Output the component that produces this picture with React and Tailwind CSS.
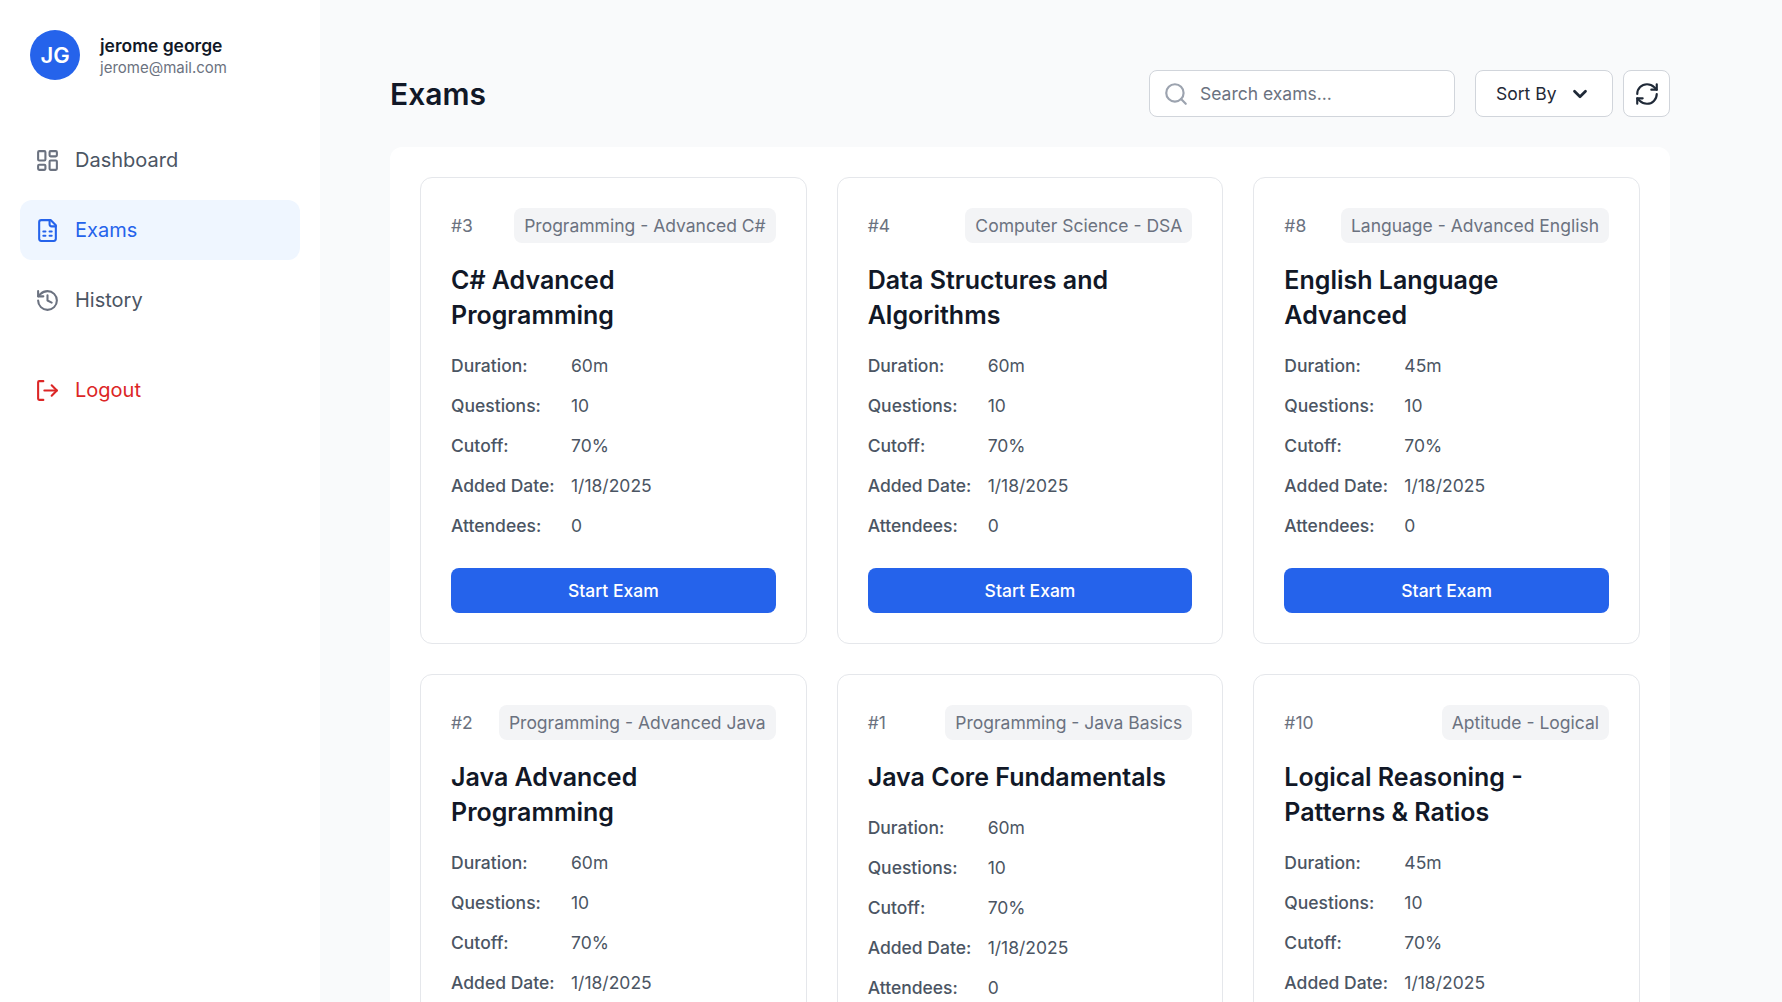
import { LayoutDashboard, History, Search, ChevronDown, RefreshCw } from 'lucide-react';

const exams = [
  { id: 3, tag: 'Programming - Advanced C#', title: 'C# Advanced Programming', duration: '60m' },
  { id: 4, tag: 'Computer Science - DSA', title: 'Data Structures and Algorithms', duration: '60m' },
  { id: 8, tag: 'Language - Advanced English', title: 'English Language Advanced', duration: '45m' },
  { id: 2, tag: 'Programming - Advanced Java', title: 'Java Advanced Programming', duration: '60m' },
  { id: 1, tag: 'Programming - Java Basics', title: 'Java Core Fundamentals', duration: '60m' },
  { id: 10, tag: 'Aptitude - Logical', title: 'Logical Reasoning - Patterns & Ratios', duration: '45m' },
];

function ExamIcon() {
  return (
    <svg width="25" height="25" viewBox="0 0 24 24" fill="none" stroke="currentColor" strokeWidth="2" strokeLinecap="round" strokeLinejoin="round">
      <path d="M15 2H6a2 2 0 0 0-2 2v16a2 2 0 0 0 2 2h12a2 2 0 0 0 2-2V7Z" />
      <path d="M14 2v4a2 2 0 0 0 2 2h4" />
      <path d="M8 13h2M14 13h2M8 17h2M14 17h2" />
    </svg>
  );
}

function LogoutIcon() {
  return (
    <svg width="25" height="25" viewBox="0 0 24 24" fill="none" stroke="currentColor" strokeWidth="2" strokeLinecap="round" strokeLinejoin="round">
      <path d="M8 3H4a1 1 0 0 0-1 1v16a1 1 0 0 0 1 1h4" />
      <path d="M21 12H9" />
      <path d="M16 7l5 5-5 5" />
    </svg>
  );
}

function NavItem({ icon, label, active, danger }) {
  let color = 'text-[#4b5563]';
  if (active) color = 'bg-[#eff6ff] text-[#2563eb]';
  if (danger) color = 'text-[#dc2626]';
  return (
    <a className={`flex items-center gap-[15px] h-[60px] px-[15px] rounded-[12px] text-[20px] ${color}`}>
      {icon}
      <span>{label}</span>
    </a>
  );
}

function Row({ label, value }) {
  return (
    <div className="flex h-[40px] items-center text-[17.5px]">
      <span className="w-[120px] font-medium text-[#4b5563]">{label}</span>
      <span className="text-[#4b5563]">{value}</span>
    </div>
  );
}

function ExamCard({ exam }) {
  return (
    <div className="bg-white border border-[#e5e7eb] rounded-[12px] p-[30px]">
      <div className="flex items-center justify-between mb-[20px]">
        <span className="pt-[2px] text-[17.5px] text-[#6b7280]">#{exam.id}</span>
        <span className="h-[35px] pt-[2px] flex items-center px-[10px] rounded-[8px] bg-[#f3f4f6] text-[17.5px] text-[#6b7280]">{exam.tag}</span>
      </div>
      <h3 className="text-[25px] leading-[35px] font-semibold text-[#111827] mb-[13px]">{exam.title}</h3>
      <div className="mb-[22px]">
        <Row label="Duration:" value={exam.duration} />
        <Row label="Questions:" value="10" />
        <Row label="Cutoff:" value="70%" />
        <Row label="Added Date:" value="1/18/2025" />
        <Row label="Attendees:" value="0" />
      </div>
      <button className="w-full h-[45px] pt-[2px] rounded-[8px] bg-[#2563eb] text-white text-[17.5px] font-medium">Start Exam</button>
    </div>
  );
}

export default function App() {
  return (
    <div className="flex h-screen overflow-hidden bg-[#f9fafb] font-['Inter',sans-serif]">
      <aside className="w-[320px] shrink-0 bg-white px-[20px] pt-[30px]">
        <div className="flex items-center gap-[20px] pl-[10px] mb-[50px]">
          <div className="w-[50px] h-[50px] rounded-full bg-[#2563eb] text-white flex items-center justify-center text-[22px] font-semibold">JG</div>
          <div>
            <p className="text-[17.5px] leading-[25px] font-semibold text-[#111827]">jerome george</p>
            <p className="text-[15px] leading-[20px] text-[#6b7280]">jerome@mail.com</p>
          </div>
        </div>
        <nav className="flex flex-col gap-[10px]">
          <NavItem icon={<LayoutDashboard size={25} className="text-[#6b7280]" />} label="Dashboard" />
          <NavItem icon={<ExamIcon />} label="Exams" active />
          <NavItem icon={<History size={25} className="text-[#6b7280]" />} label="History" />
          <div className="mt-[20px]">
            <NavItem icon={<LogoutIcon />} label="Logout" danger />
          </div>
        </nav>
      </aside>

      <main className="flex-1 pl-[70px] pt-[70px]">
        <div className="w-[1280px]">
          <div className="flex items-center justify-between mb-[30px]">
            <h1 className="pt-[2px] text-[30px] leading-[45px] font-semibold text-[#111827]">Exams</h1>
            <div className="flex items-center gap-[10px]">
              <div className="flex items-center gap-[11px] w-[306px] h-[47px] pl-[13px] pr-[15px] bg-white border border-[#d1d5db] rounded-[8px] mr-[10px]">
                <Search size={26} className="text-[#9ca3af]" />
                <span className="pt-[2px] text-[17.5px] text-[#6b7280]">Search exams...</span>
              </div>
              <button className="flex items-center gap-[12px] w-[138px] h-[47px] pl-[20px] bg-white border border-[#d1d5db] rounded-[8px] text-[17.5px] text-[#1f2937]">
                <span className="pt-[2px]">Sort By</span>
                <ChevronDown size={22} strokeWidth={3} />
              </button>
              <button className="flex items-center justify-center w-[47px] h-[47px] bg-white border border-[#d1d5db] rounded-[8px] text-[#1f2937]">
                <RefreshCw size={26} />
              </button>
            </div>
          </div>
          <div className="bg-white rounded-[12px] p-[30px] grid grid-cols-3 gap-[30px]">
            {exams.map(exam => <ExamCard key={exam.id} exam={exam} />)}
          </div>
        </div>
      </main>
    </div>
  );
}
